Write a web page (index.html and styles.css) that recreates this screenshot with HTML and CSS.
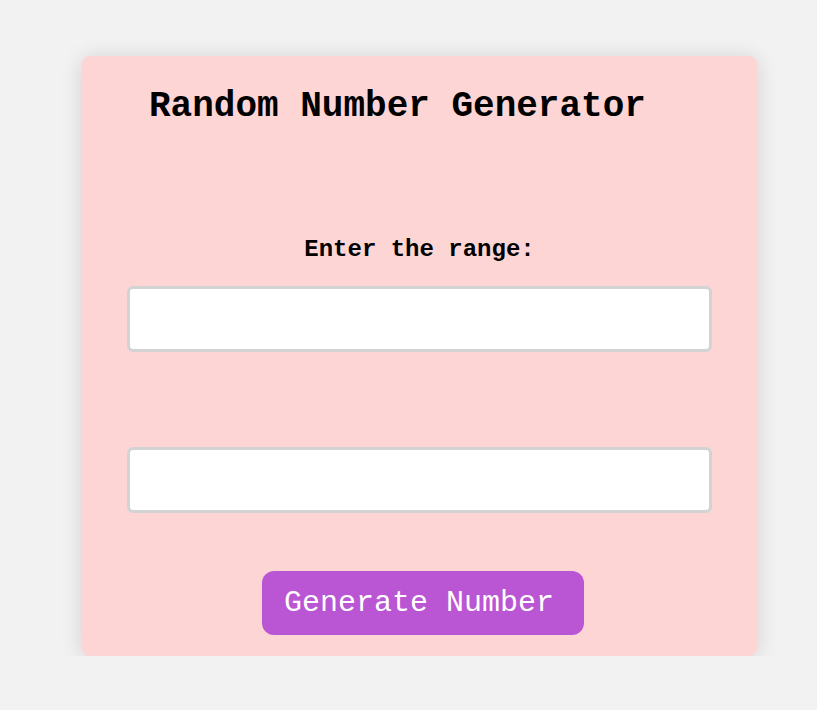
FILE: index.html
```html
<!DOCTYPE html>
<html>
<head>
<meta charset="utf-8">
<link rel="stylesheet" href="styles.css">
</head>
<body>
<div class="page">
  <div class="card">
    <h1 class="title">Random Number Generator</h1>
    <label class="label" for="min">Enter the range:</label>
    <input class="field field-first" id="min" type="text">
    <input class="field field-second" id="max" type="text">
    <button class="btn">Generate Number</button>
  </div>
</div>
</body>
</html>
```
FILE: styles.css
```css
html, body {
  margin: 0;
  padding: 0;
  background: #f2f2f2;
}
.page {
  padding: 56px 0 0 82px;
  font-family: "Courier New", "Liberation Mono", monospace;
}
.card {
  box-sizing: border-box;
  width: 675px;
  height: 600px;
  background: #fdd5d5;
  border-radius: 8px;
  box-shadow: 0 2px 22px rgba(0, 0, 0, 0.14);
  padding: 30px 45px 21px 45px;
  display: flex;
  flex-direction: column;
}
.title {
  margin: 0;
  padding-left: 22px;
  font-size: 36px;
  font-weight: bold;
  line-height: 41px;
  color: #000;
}
.label {
  margin-top: 109px;
  text-align: center;
  font-size: 24px;
  font-weight: bold;
  line-height: 27px;
  color: #000;
}
.field {
  box-sizing: border-box;
  width: 585px;
  height: 66px;
  margin: 0;
  border: 3px solid #d3d3d3;
  border-radius: 6px;
  background: #fff;
  outline: none;
  font-family: inherit;
  font-size: 20px;
  padding: 0 10px;
}
.field-first {
  margin-top: 23px;
}
.field-second {
  margin-top: 95px;
}
.btn {
  align-self: center;
  margin-top: 58px;
  margin-left: 7px;
  width: 322px;
  height: 64px;
  border: none;
  border-radius: 12px;
  background: #ba55d3;
  color: #fff;
  font-family: "Courier New", "Liberation Mono", monospace;
  font-size: 30px;
  padding: 0 8px 0 0;
}
```
